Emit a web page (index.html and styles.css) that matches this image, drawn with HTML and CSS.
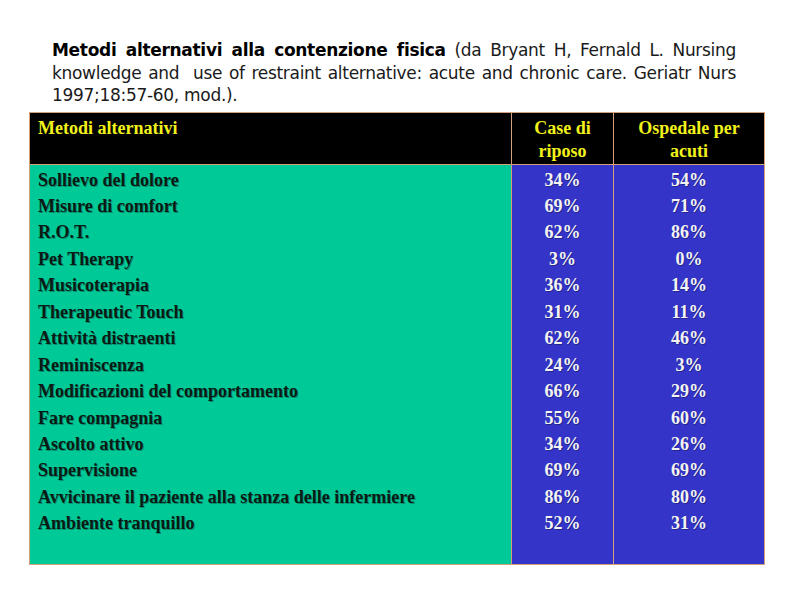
FILE: index.html
```html
<!DOCTYPE html>
<html lang="it">
<head>
<meta charset="utf-8">
<title>Metodi alternativi alla contenzione fisica</title>
<link rel="stylesheet" href="styles.css">
</head>
<body>
<div class="page">
  <p class="title"><b>Metodi alternativi alla contenzione fisica</b> (da Bryant H, Fernald L. Nursing knowledge and&nbsp; use of restraint alternative: acute and chronic care. Geriatr Nurs 1997;18:57-60, mod.).</p>
  <table class="tbl">
    <colgroup>
      <col class="c1"><col class="c2"><col class="c3">
    </colgroup>
    <thead>
      <tr>
        <th class="h-left">Metodi alternativi</th>
        <th>Case di<br>riposo</th>
        <th>Ospedale per<br>acuti</th>
      </tr>
    </thead>
    <tbody>
      <tr>
        <td class="methods">
          <div>Sollievo del dolore</div>
          <div>Misure di comfort</div>
          <div>R.O.T.</div>
          <div>Pet Therapy</div>
          <div>Musicoterapia</div>
          <div>Therapeutic Touch</div>
          <div>Attività distraenti</div>
          <div>Reminiscenza</div>
          <div>Modificazioni del comportamento</div>
          <div>Fare compagnia</div>
          <div>Ascolto attivo</div>
          <div>Supervisione</div>
          <div>Avvicinare il paziente alla stanza delle infermiere</div>
          <div>Ambiente tranquillo</div>
        </td>
        <td class="vals">
          <div>34%</div><div>69%</div><div>62%</div><div>3%</div><div>36%</div><div>31%</div><div>62%</div>
          <div>24%</div><div>66%</div><div>55%</div><div>34%</div><div>69%</div><div>86%</div><div>52%</div>
        </td>
        <td class="vals">
          <div>54%</div><div>71%</div><div>86%</div><div>0%</div><div>14%</div><div>11%</div><div>46%</div>
          <div>3%</div><div>29%</div><div>60%</div><div>26%</div><div>69%</div><div>80%</div><div>31%</div>
        </td>
      </tr>
    </tbody>
  </table>
</div>
</body>
</html>
```
FILE: styles.css
```css
html, body {
  margin: 0;
  padding: 0;
  background: #ffffff;
}
.page {
  width: 794px;
  height: 595px;
  padding-top: 39px;
  box-sizing: border-box;
}
.title {
  margin: 0 0 0 52px;
  width: 684px;
  font-family: "DejaVu Sans", "Liberation Sans", sans-serif;
  font-size: 17px;
  line-height: 22.5px;
  color: #1a1a1a;
  text-align: justify;
  letter-spacing: -0.3px;
}
.title b {
  color: #000;
}
.tbl {
  margin: 5px 0 0 29px;
  width: 735px;
  border-collapse: collapse;
  table-layout: fixed;
  font-family: "Liberation Serif", "Times New Roman", serif;
  font-weight: bold;
  font-size: 18px;
}
.c1 { width: 482px; }
.c2 { width: 102px; }
.c3 { width: 151px; }
.tbl th, .tbl td {
  border: 1px solid #d4a07c;
  vertical-align: top;
}
.tbl thead th {
  background: #000;
  color: #f2f21a;
  height: 52px;
  padding: 4px 0 0 0;
  line-height: 23px;
  text-align: center;
  font-weight: bold;
  box-sizing: border-box;
}
.tbl thead th.h-left {
  text-align: left;
  padding-left: 8px;
}
.tbl tbody td {
  height: 400px;
  padding: 2px 0 0 0;
  line-height: 26.45px;
  box-sizing: border-box;
}
.methods {
  background: #00c998;
  color: #0a1a14;
  padding-left: 8px !important;
  text-shadow: 1px 1px 0 rgba(0, 90, 70, 0.55);
}
.vals {
  background: #3434c8;
  color: #f4f4f4;
  text-align: center;
  text-shadow: 1px 1px 0 rgba(20, 20, 80, 0.5);
}
```
